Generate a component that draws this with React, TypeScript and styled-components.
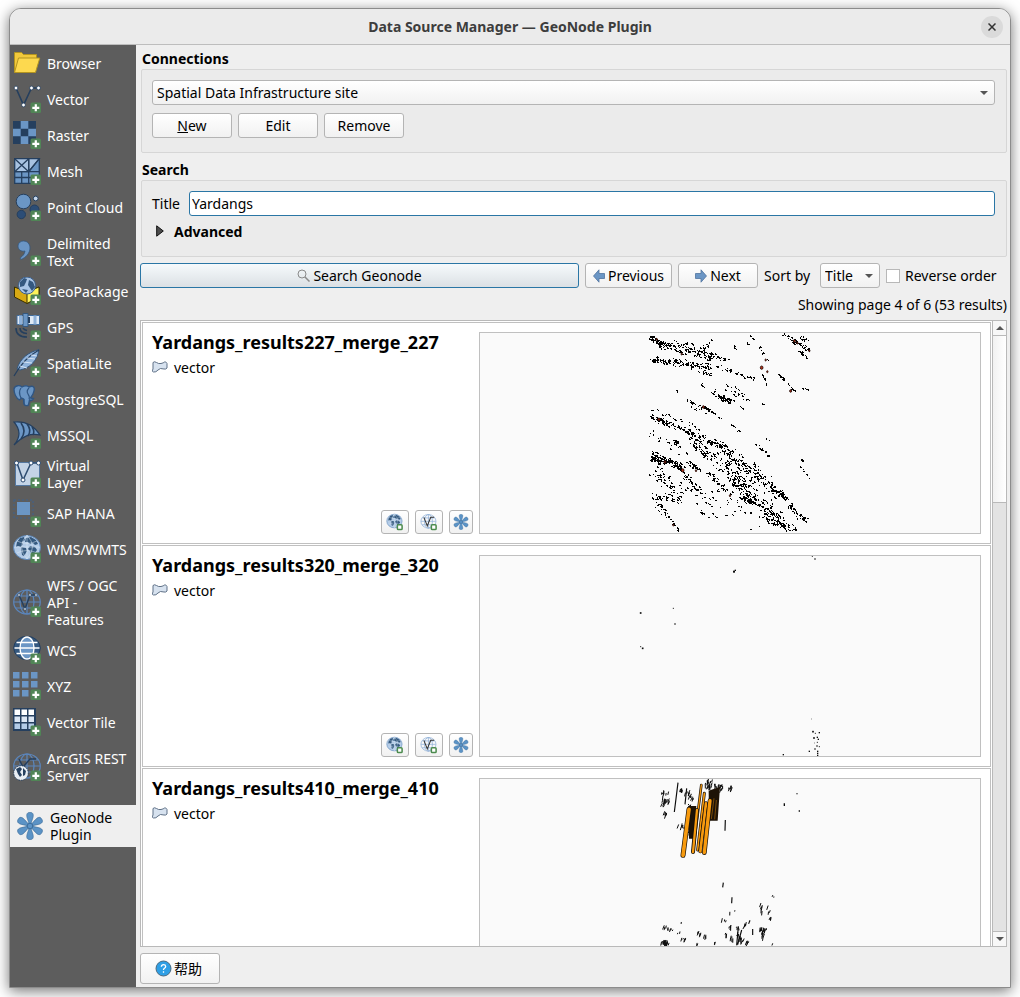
import React from "react";
import styled, { createGlobalStyle, css } from "styled-components";

const GlobalStyle = createGlobalStyle`
  *, *::before, *::after { box-sizing: border-box; }
  body {
    margin: 0;
    background: #ffffff;
    font-family: "Noto Sans", "Noto Sans CJK SC", sans-serif;
    font-size: 14px;
    line-height: 17px;
    color: #000000;
  }
  button, input, select { font: inherit; color: inherit; margin: 0; }
`;

const Desktop = styled.div`
  display: flex;
  height: 100vh;
  min-height: 600px;
  padding: 8px 9px 9px;
`;

const Dialog = styled.div`
  flex: 1;
  min-width: 0;
  display: flex;
  flex-direction: column;
  border: 1px solid #8c8c8c;
  border-radius: 12px 12px 0 0;
  background: #efefef;
  box-shadow: 0 3px 14px rgba(0, 0, 0, 0.55);
  overflow: hidden;
`;

const TitleBar = styled.header`
  display: grid;
  grid-template-columns: 36px 1fr 36px;
  align-items: center;
  height: 36px;
  flex: none;
  background: #ebebeb;
  border-bottom: 1px solid #bdbdbd;
`;

const DialogTitle = styled.h1`
  grid-column: 2;
  margin: 0;
  text-align: center;
  font-size: 14px;
  line-height: 17px;
  font-weight: 700;
  color: #3d3d3d;
`;

const CloseButton = styled.button`
  width: 22px;
  height: 22px;
  padding: 0;
  margin-left: 7px;
  border: 0;
  border-radius: 50%;
  background: #dadada;
  display: grid;
  place-items: center;
`;

const Body = styled.div`
  flex: 1;
  min-height: 0;
  display: flex;
`;

const Sidebar = styled.nav`
  width: 126px;
  flex: none;
  background: #5d5d5d;
  overflow: hidden;
`;

const SourceList = styled.ul`
  margin: 0;
  padding: 0;
  list-style: none;
`;

type RowSize = "single" | "double" | "doubleRoomy" | "triple";
const rowSizes: Record<RowSize, ReturnType<typeof css>> = {
  single: css`height: 36px;`,
  double: css`height: 42px;`,
  doubleRoomy: css`height: 48px; padding-top: 6px;`,
  triple: css`height: 65px; padding-top: 6px;`,
};

const SourceLink = styled.a<{ $size: RowSize }>`
  display: flex;
  align-items: center;
  gap: 6px;
  padding-left: 3px;
  color: #ffffff;
  text-decoration: none;
  white-space: pre;
  ${(p) => rowSizes[p.$size]}
`;

const ActiveSource = styled.a`
  display: flex;
  align-items: center;
  gap: 6px;
  height: 42px;
  margin-top: 17px;
  padding-left: 6px;
  background: #efefef;
  color: #000000;
  text-decoration: none;
  white-space: pre;
`;

const Main = styled.main`
  flex: 1;
  min-width: 0;
  display: flex;
  flex-direction: column;
  padding: 5px 3px 3px 4px;
`;

const SectionTitle = styled.h2`
  margin: 0;
  padding: 0 2px;
  height: 19px;
  font-size: 14px;
  line-height: 17px;
  font-weight: 700;
`;

const GroupBox = styled.section`
  border: 1px solid #d6d6d6;
  border-radius: 2px;
  background: #ebebeb;
  margin: 0 0 8px 1px;
  padding: 10px 11px 14px 10px;
`;

const Field = styled.div`
  display: flex;
  align-items: center;
  gap: 6px;
`;

const FieldLabel = styled.label`
  min-width: 31px;
`;

const buttonFace = css`
  height: 25px;
  border: 1px solid #b4b4b4;
  border-radius: 3px;
  background: linear-gradient(#ffffff, #f1f1f1);
`;

const SelectShell = styled.div<{ $width?: number }>`
  display: grid;
  align-items: center;
  ${(p) => (p.$width ? `width: ${p.$width}px;` : "flex: 1;")}
  > * { grid-area: 1 / 1; }
  > svg { justify-self: end; margin-right: 7px; pointer-events: none; }
`;

const Select = styled.select`
  ${buttonFace}
  width: 100%;
  padding: 0 4px;
  appearance: none;
`;

const ButtonRow = styled.div`
  display: flex;
  gap: 6px;
  margin-top: 8px;
`;

const Button = styled.button<{ $width?: number; $primary?: boolean }>`
  ${buttonFace}
  display: flex;
  align-items: center;
  justify-content: center;
  gap: 3px;
  padding: 0;
  white-space: nowrap;
  ${(p) => (p.$width ? `width: ${p.$width}px; flex: none;` : "flex: 1;")}
  ${(p) =>
    p.$primary &&
    css`
      border-color: #2a76a5;
      background: linear-gradient(#f6fafc, #dbe0e4);
    `}
`;

const TextInput = styled.input`
  flex: 1;
  min-width: 0;
  height: 25px;
  padding: 0 2px;
  border: 1px solid #2a76a5;
  border-radius: 3px;
  background: #ffffff;
  outline: 0;
`;

const Expander = styled.button`
  display: flex;
  align-items: center;
  gap: 10px;
  margin: 5px 0 1px;
  padding: 0 4px;
  height: 20px;
  border: 0;
  background: none;
  font-weight: 700;
`;

const Toolbar = styled.div`
  display: flex;
  align-items: center;
  gap: 6px;
  padding-right: 7px;
  margin-top: -2px;
`;

const SortLabel = styled.label`
  width: 50px;
  white-space: nowrap;
`;

const CheckLabel = styled.label`
  display: flex;
  align-items: center;
  gap: 5px;
  width: 114px;
  white-space: nowrap;
`;

const CheckBox = styled.input`
  appearance: none;
  flex: none;
  width: 14px;
  height: 14px;
  border: 1px solid #b8b8b8;
  background: #ffffff;
`;

const Status = styled.p`
  margin: 0;
  height: 32px;
  line-height: 33px;
  text-align: right;
  white-space: nowrap;
`;

const Results = styled.div`
  flex: 1;
  min-height: 0;
  display: flex;
  border: 1px solid #b9b9b9;
  background: #ffffff;
`;

const ResultList = styled.div`
  flex: 1;
  min-width: 0;
  display: flex;
  flex-direction: column;
  gap: 1px;
  padding: 1px 1px 0;
  overflow-y: auto;
  scrollbar-width: none;
`;

const Card = styled.article`
  flex: none;
  display: flex;
  justify-content: space-between;
  gap: 6px;
  height: 222px;
  padding: 9px;
  border: 1px solid #c0c0c0;
`;

const CardInfo = styled.div`
  flex: 1;
  min-width: 0;
  display: flex;
  flex-direction: column;
`;

const CardTitle = styled.h3`
  margin: 0;
  font-size: 18px;
  line-height: 21px;
  font-weight: 700;
  white-space: nowrap;
`;

const Kind = styled.div`
  display: flex;
  align-items: center;
  gap: 6px;
  margin-top: 4px;
  height: 20px;
`;

const CardActions = styled.div`
  display: flex;
  justify-content: flex-end;
  gap: 6px;
  margin-top: auto;
`;

const IconButton = styled.button<{ $narrow?: boolean }>`
  ${buttonFace}
  height: 24px;
  width: ${(p) => (p.$narrow ? 24 : 28)}px;
  padding: 0;
  display: grid;
  place-items: center;
`;

const Preview = styled.figure`
  margin: 0;
  width: 502px;
  flex: none;
  border: 1px solid #c0c0c0;
  background: #fafafa;
  svg { display: block; width: 100%; height: 100%; }
`;

const Scrollbar = styled.div`
  width: 14px;
  flex: none;
  display: flex;
  flex-direction: column;
  background: #e3e3e3;
  border-left: 1px solid #b9b9b9;
`;

const ScrollArrow = styled.button`
  height: 14px;
  flex: none;
  padding: 0;
  border: 0;
  background: #f7f7f7;
  display: grid;
  place-items: center;
`;

const ScrollTrack = styled.div`
  flex: 1;
  border: 1px solid #b9b9b9;
  border-width: 1px 0;
`;

const ScrollThumb = styled.div`
  height: 28%;
  background: linear-gradient(90deg, #f1f1f1, #ffffff);
  border-bottom: 1px solid #b9b9b9;
`;

const Footer = styled.footer`
  padding-top: 6px;
`;

const HelpButton = styled.button`
  ${buttonFace}
  width: 80px;
  height: 31px;
  display: flex;
  align-items: center;
  justify-content: center;
  gap: 2px;
  padding: 0 3px 0 0;
`;

/* ---------- icons ---------- */

const NAVY = "#253f5e";
const BLUE = "#6b96c5";

const Plus = () => (
  <g>
    <rect x="17.500" y="17.500" width="10.500" height="10.500" rx="1.500" fill="#508556" stroke="none" />
    <path d="M22.800 19.300v7M19.300 22.800h7" stroke="#fff" strokeWidth="2.200" fill="none" />
  </g>
);

const Globe = () => (
  <g>
    <ellipse cx="14" cy="12.500" rx="13.500" ry="12" fill="#b3cbe7" stroke="#5b86b8" strokeWidth="1" />
    <path d="M4 7l3-4 4-1 1 3-3 2 1 2-2 3-3-1-2 1zM13 3l5-1 5 3 2 4-3 1-2-2-3 1-2-2-3 0zM8 12l5 1 1 3-3 5-2-1zM17 11l5 1 2 3-3 4-2 1-2-4-2-2z" fill="#34597f" />
    <path d="M2 12h24M14 0v24M4 6q10 5 20 0M4 18q10-5 20 0M14 0q-11 12 0 24M14 0q11 12 0 24" fill="none" stroke="#dce8f5" strokeWidth=".5" />
  </g>
);

const WireGlobe = ({ stroke = "#5b86bd" }: { stroke?: string }) => (
  <g fill="none" stroke={stroke} strokeWidth="1.2">
    <ellipse cx="14" cy="13" rx="13.3" ry="12" />
    <ellipse cx="14" cy="13" rx="7" ry="12" />
    <path d="M14 1v24M1 13h26M3 7h22M3 19h22" />
  </g>
);

const iconArt: Record<string, React.ReactNode> = {
  folder: (
    <g stroke="#b39420" strokeWidth="1" strokeLinejoin="round">
      <path d="M1.500 23V3.500h7l2 2h13V9" fill="#f2c93c" />
      <path d="M1.500 23.500L5.500 9h21.300L22.500 23.500z" fill="#fdd94f" />
    </g>
  ),
  vector: (
    <g>
      <path d="M3 3l7.500 17L18.500 3H25.500" fill="none" stroke={NAVY} strokeWidth="1.6" />
      {[[3, 3], [10.5, 20], [18.5, 3], [25.5, 3]].map(([x, y]) => (
        <circle key={x} cx={x} cy={y} r="1.900" fill="#fff" stroke={NAVY} strokeWidth=".8" />
      ))}
      <Plus />
    </g>
  ),
  raster: (
    <g>
      <path d="M0 0h23v23H0z" fill={BLUE} />
      <path d="M0 0h7.700v7.700H0zM15.300 0H23v7.700h-7.700zM7.700 7.700h7.600v7.600H7.700zM0 15.300h7.700V23H0zM15.300 15.300H23V23h-7.700z" fill={NAVY} />
      <Plus />
    </g>
  ),
  mesh: (
    <g stroke={NAVY} strokeWidth="1.3">
      <path d="M1.700 1.700h24.600v24.600H1.700z" fill={BLUE} />
      <path d="M1.700 1.700h14v13h-14zM15.700 14.700V1.700h10.600z" fill="#a8c3e2" />
      <path d="M1.700 1.700l14 13M15.700 1.700l-14 13M15.700 1.700v24.600M1.700 14.700h24.600M8.700 14.700v11.600M1.700 20.500h24.600M26.300 1.700L15.700 14.700" fill="none" />
      <Plus />
    </g>
  ),
  points: (
    <g stroke={NAVY}>
      <circle cx="10.500" cy="8.500" r="7.300" fill={BLUE} />
      <circle cx="22.700" cy="5.500" r="2.400" fill="#c4d6eb" />
      <circle cx="8.300" cy="21.500" r="4.200" fill="#2c4d76" />
      <circle cx="21.500" cy="16.500" r="4.500" fill="#2c4d76" />
      <Plus />
    </g>
  ),
  comma: (
    <g>
      <path d="M5 8c0-3 2.500-5 5.500-5 4 0 6.500 3 6.500 7 0 5-4 9.500-9 11.500l-1-1.500c3-2 4.500-4 5-7-4 1-7-1.500-7-5z" fill={BLUE} stroke="#35587f" strokeWidth=".8" />
      <Plus />
    </g>
  ),
  geopackage: (
    <g>
      <path d="M1.500 10L14 15l12-5v10L14 26.500 1.500 20z" fill="#d9aa14" stroke="#3a3100" />
      <path d="M14 15l12-5v10l-12 6.500z" fill="#fff35a" stroke="#3a3100" />
      <circle cx="14" cy="8.500" r="8.500" fill="#a9c5e6" stroke="#3b618f" />
      <path d="M7 5l4-4 3 1-1 3-2 4-4 1zM16 3l4 2 2 5-3 4-4-6zM9 12l6 1-2 3z" fill="#34587f" />
      <Plus />
    </g>
  ),
  gps: (
    <g>
      <path d="M4 2.500h22.500v9H4z" fill="#dfe9f5" stroke="#426c9b" />
      <path d="M7.500 2.500v9M22 2.500v9" stroke="#8fb2da" strokeWidth="3" />
      <path d="M10 .5h5v13h-5z" fill={BLUE} stroke="#35587f" />
      <path d="M15 4h2v6h-2z" fill={NAVY} />
      <path d="M3 15q0 9 11 9M7 15q0 5 7 5.500M10 15q1 2 4 2.500" fill="none" stroke={NAVY} strokeWidth="1.6" />
      <Plus />
    </g>
  ),
  feather: (
    <g>
      <path d="M26 .7C16 3 7 9 4 20l3 1C17 19 24 12 26 .7z" fill="#8fb2da" stroke="#34587f" />
      <path d="M26 1Q11 9 1 27" fill="none" stroke={NAVY} strokeWidth="1.300" />
      <path d="M10 13l9 1M14 9l8 1M7 17l7 2M18 6l6 1" stroke="#d4e3f4" />
      <Plus />
    </g>
  ),
  postgres: (
    <g>
      <path d="M1 4C2 0 7 0 9 2c3-2 6-1 7 0 4-2 6 0 5 4-.5 3-2 5-3.500 7l3 .5c-1 2-3 2-4 1.500l-1 5c-1 1-4 1-4.500-1l-.5-5-2-1-2 2C3 13 1 8 1 4z" fill={BLUE} stroke="#2f5582" strokeWidth="1.400" />
      <path d="M8 3q-3 4 0 10M16 3q-3 3-1 6t1 5M11 14v5" fill="none" stroke="#2f5582" strokeWidth="1.200" />
      <Plus />
    </g>
  ),
  mssql: (
    <g>
      <path d="M1 1c9-1 19 2 26 13-10-2-17 1-26 10C8 16 7 8 1 1z" fill={BLUE} stroke={NAVY} strokeWidth="1.200" />
      <path d="M8 2q6 8 0 16M14 3q5 6 1 12M19 6q3 4 1 8" fill="none" stroke={NAVY} strokeWidth="1.600" />
      <Plus />
    </g>
  ),
  virtual: (
    <g>
      <path d="M2.500 2.500h24v23h-24z" fill="#c3d3e6" stroke="#54779f" />
      <path d="M4 3l6 17L18 3h8" fill="none" stroke="#2c4b70" strokeWidth="1.500" />
      {[[3.5, 3], [10, 20], [18, 3], [25.5, 3]].map(([x, y]) => (
        <circle key={x} cx={x} cy={y} r="2" fill="#fff" stroke="#2c4b70" />
      ))}
      <Plus />
    </g>
  ),
  hana: (
    <g>
      <path d="M1 1h19v18H1z" fill="none" stroke="#48607d" strokeWidth="1.500" strokeDasharray="2 2" />
      <path d="M4 3h13v13H4z" fill={BLUE} />
      <Plus />
    </g>
  ),
  wms: <g><Globe /><Plus /></g>,
  wfs: (
    <g>
      <WireGlobe />
      <path d="M6 6l6 14L17 6h6" fill="none" stroke={NAVY} strokeWidth="1.500" />
      {[[6, 6], [12, 20], [17, 6], [23, 6]].map(([x, y]) => (
        <circle key={x} cx={x} cy={y} r="1.2" fill="#fff" stroke={NAVY} strokeWidth=".6" />
      ))}
      <Plus />
    </g>
  ),
  wcs: (
    <g>
      <ellipse cx="14" cy="12" rx="13.300" ry="11.700" fill="#34587f" stroke={NAVY} />
      <ellipse cx="14" cy="12" rx="7" ry="11" fill={BLUE} stroke="#fff" strokeWidth="1.400" />
      <path d="M1.500 12h25M3.500 6.500h21M3.500 17.500h21" stroke="#fff" strokeWidth="1.400" />
      <Plus />
    </g>
  ),
  xyz: (
    <g fill={BLUE}>
      {[0, 9, 18].map((y) => [0, 9, 18].map((x) => <rect key={`${x}-${y}`} x={x} y={y} width="6.500" height="6.500" />))}
      <Plus />
    </g>
  ),
  tile: (
    <g>
      <path d="M0 0h23v23H0z" fill={NAVY} />
      {[0, 1, 2].map((r) =>
        [0, 1, 2].map((c) => (
          <rect key={`${r}-${c}`} x={1.5 + c * 7} y={1.5 + r * 7} width="5.500" height="5.500" fill={["#ffffff", "#dbe6f3", "#b3cbe6"][r]} />
        )),
      )}
      <Plus />
    </g>
  ),
  arcgis: (
    <g>
      <WireGlobe />
      <path d="M6 6l4 8L17 6h6" fill="none" stroke={NAVY} strokeWidth="1.500" />
      <circle cx="8" cy="20" r="7.300" fill="#e9eef3" stroke={NAVY} strokeDasharray="1.500 1" />
      <path d="M3 16l4-2 2 2-2 3 2 3-2 2-2-3zM10 15l3 3-1 4-2 1v-3z" fill={NAVY} />
      <Plus />
    </g>
  ),
};

const SourceIcon = ({ name }: { name: string }) => (
  <svg width="28" height="28" viewBox="0 0 28 28" aria-hidden="true">{iconArt[name]}</svg>
);

const GeoNodeIcon = ({ size }: { size: number }) => (
  <svg width={size} height={size} viewBox="0 0 28 28" aria-hidden="true">
    {[0, 60, 120, 180, 240, 300].map((a) => (
      <path key={a} transform={`rotate(${a} 14 14)`} d="M13.200 12L11.200 6C10 2 11.300.4 14 .4s4 1.600 2.800 5.600L14.800 12z" fill="#5b93c6" stroke="#41719e" strokeWidth=".7" />
    ))}
    <circle cx="14" cy="14" r="2.800" fill="#5b93c6" stroke="#336391" strokeWidth=".8" />
  </svg>
);

const SmallPlus = () => (
  <rect x="11.500" y="12.500" width="5" height="5" rx="1" fill="#fff" stroke="#4c8b4e" strokeWidth="1.600" />
);

const AddWmsIcon = () => (
  <svg width="18" height="18" viewBox="0 0 18 19" aria-hidden="true">
    <g transform="translate(0 1) scale(.6)"><Globe /></g>
    <SmallPlus />
  </svg>
);

const AddWfsIcon = () => (
  <svg width="18" height="18" viewBox="0 0 18 19" aria-hidden="true">
    <g transform="translate(0 1) scale(.6)">
      <WireGlobe stroke="#86aad4" />
      <path d="M6 6l6 15L18 6h6" fill="none" stroke="#333" strokeWidth="1.800" />
    </g>
    <SmallPlus />
  </svg>
);

const Caret = ({ up }: { up?: boolean }) => (
  <svg width="8" height="4" viewBox="0 0 8 4" aria-hidden="true">
    <path d={up ? "M0 4h8L4 0z" : "M0 0h8L4 4z"} fill="#555" />
  </svg>
);

const Arrow = ({ flip }: { flip?: boolean }) => (
  <svg width="12" height="14" viewBox="0 0 12 14" aria-hidden="true">
    <path d="M.5 7L6 .8v3.700h5.500v5H6v3.700z" transform={flip ? "rotate(180 6 7)" : undefined} fill="#6b96c5" stroke="#50749e" strokeWidth=".8" />
  </svg>
);

const VectorKindIcon = () => (
  <svg width="16" height="12" viewBox="0 0 16 12" aria-hidden="true">
    <path d="M1 1.500Q2.500 0 4.500 1.500T9 2.500 12.500 1 15 2.500V7q-1 1.500-3 1-4-1.500-6 1T1.500 11 1 8z" fill="#d7e2ef" stroke="#5f7187" />
  </svg>
);

/* ---------- map previews ---------- */

type Streak = [number, number, number, number, number, number];

function scatter(streaks: Streak[], seed: number, angle: number, length: number) {
  let s = seed;
  const rnd = () => {
    s = (s * 1664525 + 1013904223) % 4294967296;
    return s / 4294967296;
  };
  const parts: string[] = [];
  streaks.forEach(([x1, y1, x2, y2, spread, count]) => {
    const len = Math.hypot(x2 - x1, y2 - y1) || 1;
    for (let i = 0; i < count; i++) {
      const t = rnd();
      const off = (rnd() + rnd() - 1) * spread * 1.4;
      const x = x1 + (x2 - x1) * t - ((y2 - y1) / len) * off;
      const y = y1 + (y2 - y1) * t + ((x2 - x1) / len) * off;
      const a = angle + (rnd() - 0.5) * 0.5;
      const l = length * (0.3 + rnd());
      parts.push(`M${x.toFixed(1)} ${y.toFixed(1)}l${(Math.cos(a) * l).toFixed(1)} ${(Math.sin(a) * l).toFixed(1)}`);
    }
  });
  return parts.join("");
}

const denseField = scatter(
  [
    [30, 35, 75, 65, 8, 50], [60, 60, 215, 90, 12, 105], [100, 50, 160, 60, 8, 12], [30, 100, 90, 110, 8, 38],
    [85, 110, 215, 125, 10, 75], [150, 120, 210, 150, 8, 22], [205, 90, 275, 105, 8, 20], [225, 120, 340, 160, 5, 28],
    [180, 80, 215, 40, 6, 14], [280, 65, 290, 72, 4, 3], [330, 30, 340, 40, 2, 4], [355, 60, 385, 110, 4, 8],
    [365, 145, 378, 180, 3, 6], [415, 145, 465, 200, 3, 24], [430, 27, 508, 75, 6, 45], [480, 35, 505, 50, 4, 12],
    [475, 75, 500, 98, 3, 12], [485, 188, 505, 192, 2, 3], [183, 175, 190, 185, 3, 5], [215, 200, 280, 235, 8, 48],
    [250, 185, 330, 220, 14, 22], [300, 245, 310, 252, 2, 4], [140, 225, 190, 250, 4, 20], [185, 240, 250, 285, 3, 24],
    [150, 245, 215, 275, 3, 8], [270, 295, 297, 318, 2, 9], [335, 348, 395, 398, 3, 14], [374, 337, 402, 355, 1, 2],
    [483, 402, 488, 406, 2, 4], [480, 420, 508, 462, 3, 8], [105, 188, 112, 205, 2, 4], [367, 235, 368, 247, 1, 3],
    [318, 52, 325, 60, 2, 4],
    [30, 250, 200, 320, 5, 22], [30, 275, 150, 320, 7, 75], [130, 320, 250, 365, 10, 75], [160, 345, 200, 390, 12, 50],
    [105, 345, 120, 365, 6, 14], [250, 370, 440, 520, 10, 105], [200, 380, 420, 580, 16, 120], [270, 450, 340, 530, 18, 85],
    [300, 510, 430, 580, 9, 65], [430, 520, 498, 590, 10, 45], [370, 570, 465, 615, 14, 80], [240, 370, 420, 510, 26, 125],
    [200, 440, 280, 515, 8, 38], [34, 385, 130, 430, 9, 110], [30, 398, 60, 410, 6, 26], [110, 420, 180, 505, 3, 30],
    [140, 410, 180, 435, 5, 24], [40, 430, 120, 520, 20, 62], [50, 515, 130, 530, 6, 24], [60, 540, 115, 615, 5, 32],
    [40, 480, 60, 580, 10, 15], [130, 460, 220, 540, 24, 36], [180, 560, 260, 580, 8, 12], [210, 500, 380, 600, 30, 24],
    [30, 325, 150, 390, 14, 20],
  ],
  71, 0.7, 6,
);

const redSpots: [number, number, number][] = [
  [365, 128, 4], [382, 140, 2], [377, 105, 2], [452, 198, 3], [50, 43, 2], [125, 87, 2], [463, 48, 3], [472, 54, 2],
  [508, 77, 2], [57, 283, 3], [190, 246, 3], [128, 436, 4], [75, 411, 3], [168, 437, 2], [270, 512, 2], [100, 600, 2],
];

const DenseMap = () => (
  <svg viewBox="0 0 500 200" role="img" aria-label="Layer preview">
    <g transform="translate(160 -8) scale(.33333)">
      <path d={denseField} stroke="#000000" strokeWidth="3.400" fill="none" shapeRendering="crispEdges" />
      {redSpots.map(([x, y, r]) => (
        <ellipse key={`${x}-${y}`} cx={x} cy={y} rx={r} ry={r + 1} fill="#b83218" stroke="#1c0805" strokeWidth="2.500" />
      ))}
    </g>
  </svg>
);

const sparseDots: [number, number, number][] = [
  [312, 65, 6], [316, 61, 4], [547, 19, 3], [555, 27, 4], [32, 189, 5], [130, 175, 3], [135, 222, 4], [32, 290, 3],
  [38, 295, 5], [545, 507, 2], [549, 545, 5], [556, 550, 3], [568, 548, 4], [552, 564, 5], [562, 562, 4], [565, 568, 4],
  [553, 579, 2], [562, 577, 3], [561, 588, 4], [568, 590, 3], [555, 597, 4], [538, 604, 4], [563, 604, 4], [563, 610, 4],
  [563, 616, 4], [460, 614, 4],
];

const SparseMap = () => (
  <svg viewBox="0 0 500 200" role="img" aria-label="Layer preview">
    <g transform="translate(150 -6) scale(.33333)" fill="#0c0c0c">
      {sparseDots.map(([x, y, d]) => (
        <rect key={`${x}-${y}`} x={x - d / 2} y={y - d / 2} width={d} height={d} />
      ))}
    </g>
  </svg>
);

const stripField = scatter(
  [
    [65, 68, 85, 60, 6, 8], [65, 92, 88, 96, 9, 18], [72, 118, 84, 132, 6, 7], [122, 55, 135, 60, 5, 6],
    [145, 60, 160, 85, 9, 15], [195, 36, 250, 48, 10, 30], [255, 54, 278, 54, 7, 6], [118, 158, 135, 175, 6, 8],
    [145, 165, 155, 195, 5, 16], [145, 107, 170, 112, 8, 16], [200, 30, 205, 50, 5, 10],
    [65, 466, 120, 488, 4, 11], [165, 482, 205, 498, 3, 9], [65, 512, 88, 520, 7, 22], [115, 498, 180, 522, 3, 7],
    [225, 514, 227, 515, 2, 2], [268, 470, 300, 473, 4, 8], [255, 490, 280, 508, 4, 8], [290, 485, 308, 512, 6, 12],
    [300, 510, 330, 516, 6, 9], [312, 466, 330, 450, 5, 6], [360, 473, 382, 475, 5, 11], [368, 478, 372, 502, 3, 8],
    [365, 395, 368, 440, 3, 6], [386, 405, 392, 445, 3, 6], [395, 370, 402, 380, 2, 2], [236, 440, 260, 452, 2, 3],
    [268, 426, 288, 420, 2, 2], [122, 454, 124, 456, 1, 1], [398, 519, 400, 521, 1, 1],
  ],
  29, 1.8, 11,
);

const StripMap = () => (
  <svg viewBox="0 0 500 200" preserveAspectRatio="xMidYMin slice" role="img" aria-label="Layer preview">
    <g transform="translate(160 -9) scale(.33333)" fill="none" stroke="#0c0c0c">
      <path d={stripField} strokeWidth="3" />
      <path d="M114 38l-11 88M140 55l-5 48M256 150l-1 32M250 338l-2 14M276 382l-1 18M338 477v18M295 470l-5 56M305 480l-12 44" strokeWidth="3.500" />
      <path d="M206 62l34-12-7 102h-26zM145 108h24l-8 98h-14z" fill="#1d1206" stroke="none" />
      <path d="M222 85l-8 62M229 90l-5 58" stroke="#a86606" strokeWidth="2" />
      {["M147 118L129 256", "M184 45L159 245", "M171 120L159 246", "M193 70L173 240", "M198 100L181 244", "M210 92L193 248", "M148 110l-3 60"].slice(0, 6).map((d, i) => (
        <g key={d}>
          <path d={d} stroke="#17100a" strokeWidth={[15, 8, 12, 9, 12, 14][i]} strokeLinecap="round" />
          <path d={d} stroke="#f79a0e" strokeWidth={[11, 4, 7, 5, 8, 10][i]} strokeLinecap="round" />
        </g>
      ))}
      <path d="M433 100v8M478 121v4M471 70v3" strokeWidth="4" />
    </g>
  </svg>
);

/* ---------- data ---------- */

const sources: { label: string; icon: string; size?: RowSize }[] = [
  { label: "Browser", icon: "folder" },
  { label: "Vector", icon: "vector" },
  { label: "Raster", icon: "raster" },
  { label: "Mesh", icon: "mesh" },
  { label: "Point Cloud", icon: "points" },
  { label: "Delimited\nText", icon: "comma", size: "doubleRoomy" },
  { label: "GeoPackage", icon: "geopackage" },
  { label: "GPS", icon: "gps" },
  { label: "SpatiaLite", icon: "feather" },
  { label: "PostgreSQL", icon: "postgres" },
  { label: "MSSQL", icon: "mssql" },
  { label: "Virtual\nLayer", icon: "virtual", size: "double" },
  { label: "SAP HANA", icon: "hana" },
  { label: "WMS/WMTS", icon: "wms" },
  { label: "WFS / OGC\nAPI -\nFeatures", icon: "wfs", size: "triple" },
  { label: "WCS", icon: "wcs" },
  { label: "XYZ", icon: "xyz" },
  { label: "Vector Tile", icon: "tile" },
  { label: "ArcGIS REST\nServer", icon: "arcgis", size: "doubleRoomy" },
];

const results = [
  { title: "Yardangs_results227_merge_227", Map: DenseMap },
  { title: "Yardangs_results320_merge_320", Map: SparseMap },
  { title: "Yardangs_results410_merge_410", Map: StripMap },
];

export default function App() {
  return (
    <>
      <GlobalStyle />
      <Desktop>
        <Dialog role="dialog" aria-labelledby="dialog-title">
          <TitleBar>
            <DialogTitle id="dialog-title">Data Source Manager — GeoNode Plugin</DialogTitle>
            <CloseButton type="button" aria-label="Close">
              <svg width="8" height="8" viewBox="0 0 8 8" aria-hidden="true">
                <path d="M.5.5l7 7M7.500.5l-7 7" stroke="#333" strokeWidth="1.500" />
              </svg>
            </CloseButton>
          </TitleBar>
          <Body>
            <Sidebar aria-label="Data sources">
              <SourceList>
                {sources.map((s) => (
                  <li key={s.label}>
                    <SourceLink href="#" $size={s.size ?? "single"}>
                      <SourceIcon name={s.icon} />
                      {s.label}
                    </SourceLink>
                  </li>
                ))}
                <li>
                  <ActiveSource href="#" aria-current="page">
                    <GeoNodeIcon size={28} />
                    {"GeoNode\nPlugin"}
                  </ActiveSource>
                </li>
              </SourceList>
            </Sidebar>
            <Main>
              <SectionTitle>Connections</SectionTitle>
              <GroupBox>
                <SelectShell>
                  <Select aria-label="Connection">
                    <option>Spatial Data Infrastructure site</option>
                  </Select>
                  <Caret />
                </SelectShell>
                <ButtonRow>
                  <Button type="button" $width={80}><span><u>N</u>ew</span></Button>
                  <Button type="button" $width={80}>Edit</Button>
                  <Button type="button" $width={80}>Remove</Button>
                </ButtonRow>
              </GroupBox>
              <SectionTitle>Search</SectionTitle>
              <GroupBox>
                <Field>
                  <FieldLabel htmlFor="title">Title</FieldLabel>
                  <TextInput id="title" type="text" defaultValue="Yardangs" />
                </Field>
                <Expander type="button" aria-expanded="false">
                  <svg width="8" height="12" viewBox="0 0 8 12" aria-hidden="true">
                    <path d="M.7.8L7.300 6 .7 11.200z" fill="#4d4d4d" stroke="#111" />
                  </svg>
                  Advanced
                </Expander>
              </GroupBox>
              <Toolbar>
                <Button type="button" $primary>
                  <svg width="13" height="13" viewBox="0 0 13 13" fill="none" stroke="#8a8a8a" aria-hidden="true">
                    <circle cx="5" cy="5" r="4" />
                    <path d="M8 8l4.500 4.500" strokeWidth="1.500" />
                  </svg>
                  Search Geonode
                </Button>
                <Button type="button" $width={87}><Arrow />Previous</Button>
                <Button type="button" $width={80}><Arrow flip />Next</Button>
                <SortLabel htmlFor="sort">Sort by</SortLabel>
                <SelectShell $width={60}>
                  <Select id="sort"><option>Title</option></Select>
                  <Caret />
                </SelectShell>
                <CheckLabel><CheckBox type="checkbox" />Reverse order</CheckLabel>
              </Toolbar>
              <Status>Showing page 4 of 6 (53 results)</Status>
              <Results>
                <ResultList>
                  {results.map(({ title, Map }) => (
                    <Card key={title}>
                      <CardInfo>
                        <CardTitle>{title}</CardTitle>
                        <Kind><VectorKindIcon />vector</Kind>
                        <CardActions>
                          <IconButton type="button" aria-label="Add via WMS"><AddWmsIcon /></IconButton>
                          <IconButton type="button" aria-label="Add via WFS"><AddWfsIcon /></IconButton>
                          <IconButton type="button" aria-label="Open in GeoNode" $narrow><GeoNodeIcon size={16} /></IconButton>
                        </CardActions>
                      </CardInfo>
                      <Preview><Map /></Preview>
                    </Card>
                  ))}
                </ResultList>
                <Scrollbar>
                  <ScrollArrow type="button" aria-label="Scroll up"><Caret up /></ScrollArrow>
                  <ScrollTrack><ScrollThumb /></ScrollTrack>
                  <ScrollArrow type="button" aria-label="Scroll down"><Caret /></ScrollArrow>
                </Scrollbar>
              </Results>
              <Footer>
                <HelpButton type="button">
                  <svg width="17" height="17" viewBox="0 0 17 17" aria-hidden="true">
                    <circle cx="8.500" cy="8.500" r="7.500" fill="#2e9fe6" stroke="#4b6a80" />
                    <path d="M6.300 6.800Q6.500 4.700 8.500 4.700T10.700 6.500Q10.700 7.500 9.500 8.200T8.500 10M8.500 11.300v1.500" fill="none" stroke="#fff" strokeWidth="1.300" />
                  </svg>
                  帮助
                </HelpButton>
              </Footer>
            </Main>
          </Body>
        </Dialog>
      </Desktop>
    </>
  );
}
